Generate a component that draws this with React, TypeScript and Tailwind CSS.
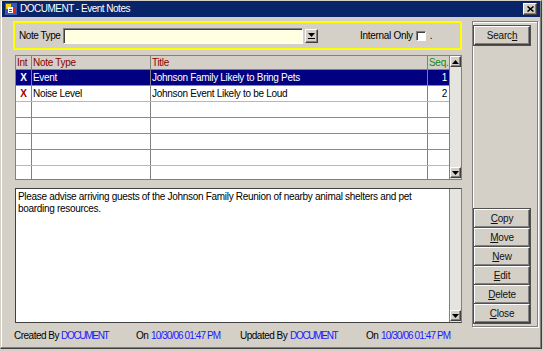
import React from 'react';

const raised =
  'border border-t-white border-l-white border-b-[#404040] border-r-[#404040] shadow-[inset_-1px_-1px_0_#808080] bg-[#d4d0c8]';
const sunken =
  'border border-t-[#808080] border-l-[#808080] border-b-white border-r-white shadow-[inset_1px_1px_0_#404040]';

type Row = { int?: boolean; type?: string; title?: string; seq?: number; selected?: boolean };

const rows: Row[] = [
  { int: true, type: 'Event', title: 'Johnson Family Likely to Bring Pets', seq: 1, selected: true },
  { int: true, type: 'Noise Level', title: 'Johnson Event Likely to be Loud', seq: 2 },
  {},
  {},
  {},
  {},
  {},
];

const Arrow = ({ up }: { up?: boolean }) => (
  <svg width="7" height="4" viewBox="0 0 7 4">
    {up ? <path d="M3.5 0 L7 4 L0 4 Z" fill="#000" /> : <path d="M0 0 L7 0 L3.5 4 Z" fill="#000" />}
  </svg>
);

const ScrollBtn = ({ up }: { up?: boolean }) => (
  <div className={`${raised} h-[11px] w-full flex items-center justify-center shrink-0`}>
    <Arrow up={up} />
  </div>
);

// button label with the mnemonic letter underlined
const Btn = ({ pre = '', u, post = '' }: { pre?: string; u: string; post?: string }) => (
  <div className={`${raised} outline outline-1 outline-[#505050] h-[19px] w-[56px] flex items-center justify-center text-[10px] tracking-[-0.2px] text-[#111]`}>
    <span>
      {pre}
      <span className="underline">{u}</span>
      {post}
    </span>
  </div>
);

export default function App() {
  return (
    <div className="w-[543px] h-[351px] bg-[#d4d0c8] font-['Liberation_Sans',Arial,sans-serif] text-black overflow-hidden">
      <div className="w-[542px] h-[349px] border border-t-[#d4d0c8] border-l-[#d4d0c8] border-r-[#404040] border-b-[#404040] shadow-[inset_-1px_-1px_0_#808080,inset_1px_1px_0_#fff] flex flex-col">
        {/* Title bar */}
        <div className="h-[16px] mx-[1px] bg-[#0a246a] flex items-center pl-[3px] pr-[3px]">
          <svg width="12" height="12" viewBox="0 0 12 12" className="shrink-0">
            <rect x="0" y="0" width="12" height="12" fill="#3a5ab0" />
            <rect x="1" y="1" width="5" height="5" fill="#f2d21c" />
            <rect x="6" y="5" width="5" height="6" fill="#d8262a" />
            <rect x="3" y="4" width="5" height="6" fill="#ffffff" />
            <rect x="4" y="6" width="3" height="1" fill="#3a5ab0" />
            <rect x="4" y="8" width="3" height="1" fill="#3a5ab0" />
          </svg>
          <span className="ml-[3px] text-white text-[10px] tracking-[-0.5px] leading-none">DOCUMENT - Event Notes</span>
          <div className={`${raised} ml-auto w-[14px] h-[12px] flex items-center justify-center`}>
            <svg width="7" height="6" viewBox="0 0 7 6">
              <path d="M0.5 0.5 L6.5 5.5 M6.5 0.5 L0.5 5.5" stroke="#000" strokeWidth="1.6" />
            </svg>
          </div>
        </div>

        {/* Body */}
        <div className="flex items-start pt-[4px]">
          <div className="ml-[12px] w-[449px] flex flex-col">
            {/* Search criteria */}
            <div className="h-[29px] border-2 border-[#ffff00] flex items-center pl-[4px] text-[10px] tracking-[-0.3px]">
              <span className="w-[44px] tracking-[-0.45px]">Note Type</span>
              <div className={`${sunken} w-[240px] h-[16px] bg-[#ffffe1]`} />
              <div className={`${raised} ml-[2px] w-[13px] h-[14px] flex flex-col items-center justify-center gap-[1px]`}>
                <Arrow />
                <div className="w-[7px] h-[1px] bg-black" />
              </div>
              <span className="ml-[42px]">Internal Only</span>
              <div className={`${sunken} ml-[3px] w-[10px] h-[10px] bg-white`} />
              <span className="ml-[4px]">.</span>
            </div>

            {/* Notes grid */}
            <div className="mt-[5px] ml-[2px] w-[447px] h-[125px] border border-[#808080] flex overflow-hidden text-[10px] tracking-[-0.3px]">
              <div className="flex-1 flex flex-col">
                <div className="h-[14px] shrink-0 flex bg-[#d4d0c8] border-b border-[#808080]">
                  <div className="w-[16px] border-r border-[#808080] pl-[1px] text-[#8b0000] leading-[13px]">Int</div>
                  <div className="w-[119px] border-r border-[#808080] pl-[1px] text-[#8b0000] leading-[13px]">Note Type</div>
                  <div className="w-[277px] border-r border-[#808080] pl-[1px] text-[#8b0000] leading-[13px]">Title</div>
                  <div className="flex-1 pl-[1px] text-[#118a11] leading-[13px]">Seq.</div>
                </div>
                {rows.map((r, i) => (
                  <div
                    key={i}
                    className={`h-[16px] shrink-0 flex border-b ${i === 1 || i === 5 ? 'border-[#b8b8b8]' : 'border-[#8a8a8a]'} ${
                      r.selected ? 'bg-[#000080] text-white' : 'bg-white text-black'
                    }`}
                  >
                    <div
                      className={`w-[16px] border-r border-[#808080] flex items-center justify-center font-bold ${
                        r.selected ? 'text-white' : 'text-[#a00000]'
                      }`}
                    >
                      {r.int ? 'X' : ''}
                    </div>
                    <div className="w-[119px] border-r border-[#808080] pl-[1px] flex items-center">{r.type}</div>
                    <div className="w-[277px] border-r border-[#808080] pl-[1px] flex items-center">{r.title}</div>
                    <div className="flex-1 pr-[2px] flex items-center justify-end">{r.seq}</div>
                  </div>
                ))}
              </div>
              <div className="w-[12px] shrink-0 flex flex-col bg-[#e6e4df] border-l border-[#808080]">
                <ScrollBtn up />
                <div className="flex-1" />
                <div className="mb-[1px]">
                  <ScrollBtn />
                </div>
              </div>
            </div>

            {/* Note text */}
            <div className="mt-[8px] ml-[2px] w-[447px] h-[135px] border border-t-[#404040] border-l-[#404040] border-b-[#404040] border-r-[#808080] bg-white flex">
              <div className="flex-1 pl-[2px] pt-[2px] text-[10px] tracking-[-0.3px] leading-[12px]">
                Please advise arriving guests of the Johnson Family Reunion of nearby animal shelters and pet
                <br />
                boarding resources.
              </div>
              <div className="w-[12px] shrink-0 flex flex-col bg-[#e6e4df] border-l border-[#808080]">
                <div className="flex-1" />
                <div className="mb-[1px]">
                  <ScrollBtn />
                </div>
              </div>
            </div>
          </div>

          {/* Button panel */}
          <div className="ml-[10px] w-[66px] h-[306px] border border-[#808080] shadow-[inset_1px_1px_0_#fff,1px_1px_0_#fff] flex flex-col pl-[1px] pt-[4px] pb-[3px]">
            <Btn pre="Searc" u="h" />
            <div className="mt-auto flex flex-col">
              <Btn u="C" post="opy" />
              <Btn u="M" post="ove" />
              <Btn u="N" post="ew" />
              <Btn u="E" post="dit" />
              <Btn u="D" post="elete" />
              <Btn u="C" post="lose" />
            </div>
          </div>
        </div>

        {/* Footer */}
        <div className="mt-[3px] ml-[13px] h-[12px] flex items-baseline leading-[12px] text-[10px] whitespace-nowrap">
          <span className="w-[47px] tracking-[-0.5px]">Created By</span>
          <span className="w-[75px] text-[#1a1aff] tracking-[-1.3px]">DOCUMENT</span>
          <span className="w-[15px] tracking-[-0.6px]">On</span>
          <span className="w-[89px] text-[#1a1aff] tracking-[-0.9px]">10/30/06 01:47 PM</span>
          <span className="w-[50px] tracking-[-0.5px]">Updated By</span>
          <span className="w-[76px] text-[#1a1aff] tracking-[-1.3px]">DOCUMENT</span>
          <span className="w-[15px] tracking-[-0.6px]">On</span>
          <span className="text-[#1a1aff] tracking-[-0.9px]">10/30/06 01:47 PM</span>
        </div>
      </div>
    </div>
  );
}
